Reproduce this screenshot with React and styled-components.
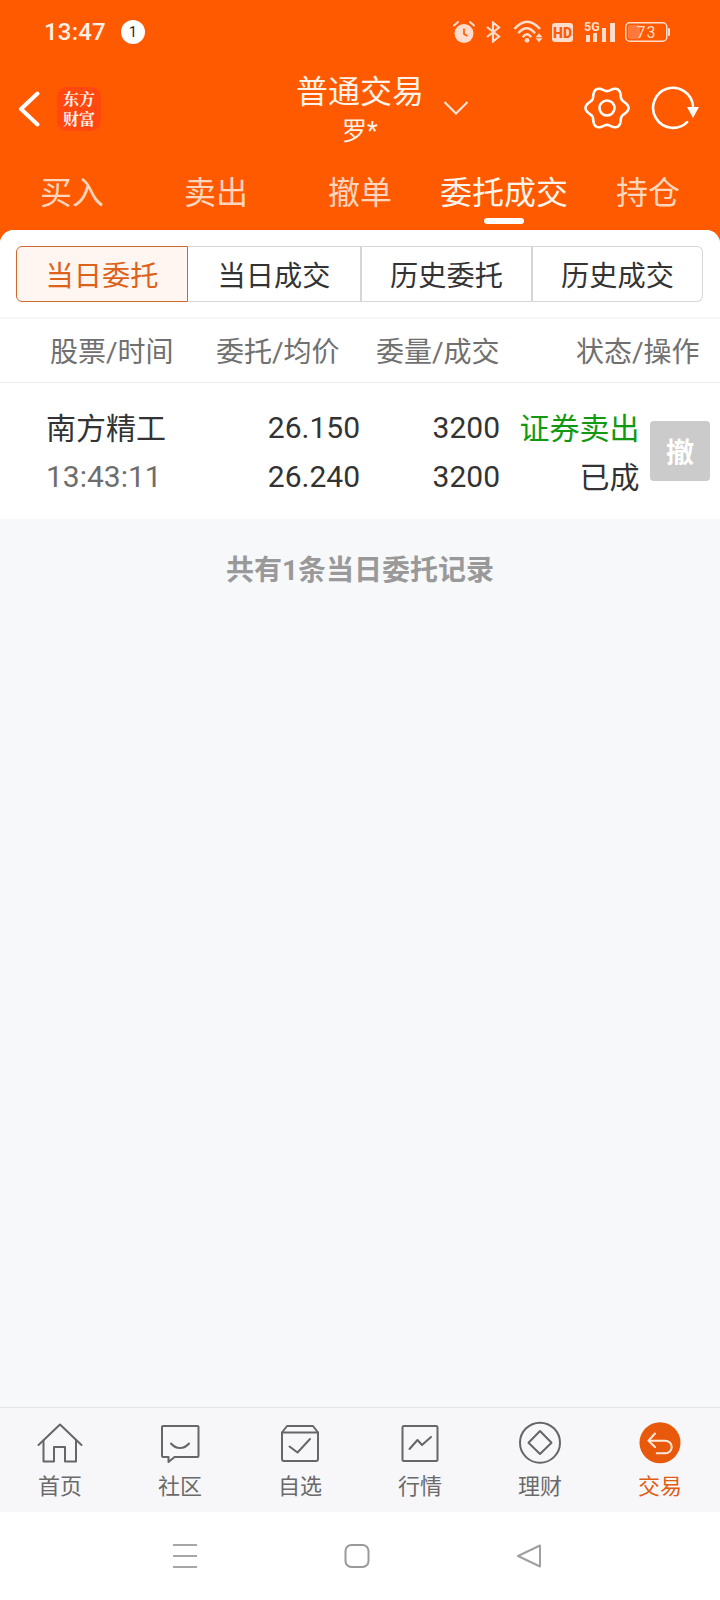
import React from 'react';
import styled, { createGlobalStyle } from 'styled-components';

const Global = createGlobalStyle`
  html, body { margin: 0; padding: 0; background: #fff; }
  * { box-sizing: border-box; }
  body { font-family: Roboto, "Noto Sans CJK SC", sans-serif; }
`;

const Page = styled.div`
  width: 720px; height: 1600px; display: flex; flex-direction: column;
  background: #ff5a00; overflow: hidden;
`;
const StatusBar = styled.div`
  height: 65px; display: flex; align-items: center; padding: 0 50px 1px 44px; color: #fff;
`;
const Time = styled.span`font-size: 24px; font-weight: 500; line-height: 1; color: #fff0e6; letter-spacing: 0.2px;`;
const Badge = styled.span`
  width: 24px; height: 24px; border-radius: 50%; background: #fff; color: #222; margin-left: 15px;
  display: flex; align-items: center; justify-content: center; font-size: 14px; font-weight: 400;
`;
const StatusIcons = styled.div`margin-left: auto; display: flex; align-items: center; gap: 9px;`;
const Header = styled.div`
  height: 90px; display: grid; grid-template-columns: 1fr 160px 1fr; align-items: center;
`;
const HeadLeft = styled.div`display: flex; align-items: center; padding: 0 0 3px 18px; gap: 17px;`;
const Logo = styled.div`
  width: 44px; height: 44px; border-radius: 10px; background: #ff4710; color: #fff3ea;
  display: flex; align-items: center; justify-content: center; text-align: center;
  font-family: "Noto Serif CJK SC", "Noto Sans CJK SC", sans-serif; font-size: 16px; line-height: 20px; font-weight: 700;
`;
const TitleBox = styled.div`align-self: start; display: flex; flex-direction: column; align-items: center; color: #fff;`;
const Title = styled.div`font-size: 32px; line-height: 44px; margin-top: 5px; color: #fff2e8;`;
const Sub = styled.div`font-size: 25px; line-height: 34px; margin-top: 1px; color: #fff2e8;`;
const HeadRight = styled.div`display: flex; align-items: center; padding: 0 20px 4px 3px;`;
const Actions = styled.div`margin-left: auto; display: flex; align-items: center; gap: 20px;`;
const Tabs = styled.div`height: 75px; display: grid; grid-template-columns: repeat(5, 144px);`;
const Tab = styled.div`
  position: relative; text-align: center; font-size: 32px; line-height: 54px; padding-top: 11px;
  color: ${p => (p.$active ? '#fff4ec' : '#ffd6bd')};
`;
const TabMark = styled.span`
  position: absolute; left: 52px; top: 63px; width: 40px; height: 6px; border-radius: 3px; background: #fff;
`;
const Main = styled.div`
  flex: 1; background: #f7f8fa; border-radius: 14px 14px 0 0; overflow: hidden; display: flex; flex-direction: column;
`;
const Top = styled.div`background: #fff; padding: 16px 17px 15px 16px; border-bottom: 2px solid #f6f6f6;`;
const Segments = styled.div`display: grid; grid-template-columns: 172px 174px 171px 1fr; height: 56px;`;
const Segment = styled.div`
  display: flex; align-items: center; justify-content: center; font-size: 28.200px; padding-bottom: 1px;
  border: 1px solid ${p => (p.$active ? '#cf6a2e' : '#d6d6d6')};
  border-left-width: ${p => (p.$active ? '1px' : '0')};
  border-right-width: ${p => (p.$active || p.$last ? '1px' : '2px')};
  background: ${p => (p.$active ? '#fff6f1' : '#fff')};
  color: ${p => (p.$active ? '#dd6118' : '#333')};
  border-radius: ${p => (p.$active ? '6px 0 0 6px' : p.$last ? '0 6px 6px 0' : '0')};
`;
const TableHead = styled.div`
  height: 64px; background: #fff; display: grid; grid-template-columns: 166px 160px 200px 1fr; padding-left: 50px;
  align-items: center; font-size: 28px; color: #707070; border-bottom: 1px solid #ebebeb; padding-bottom: 2px;
`;
const Row = styled.div`
  background: #fff; display: grid; grid-template-columns: 214px 100px 140px 139.500px 70.500px; grid-template-rows: 48px 50px;
  padding: 20px 0 18px 46px; align-items: center; font-size: 30px; color: #333;
`;
const Name = styled.div`font-size: 30px; padding-bottom: 2px;`;
const Clock = styled.div`color: #6d6d6d;`;
const Num = styled.div`text-align: right;`;
const Status = styled.div`text-align: right; font-size: 30px; padding-bottom: 2px; color: ${p => p.$color};`;
const Cancel = styled.div`
  grid-column: 5; grid-row: 1 / 3; justify-self: end; width: 60px; height: 60px; border-radius: 4px; background: #cbcbcb;
  margin-bottom: 2px; color: #fff; display: flex; align-items: center; justify-content: center; font-size: 28px; font-weight: 700;
`;
const Footnote = styled.div`
  text-align: center; font-size: 28px; font-weight: 700; color: #999; margin-top: 33px; line-height: 38px;
`;
const TabBar = styled.div`
  height: 105px; background: #f7f7f9; border-top: 1px solid #e4e4e4; display: grid; grid-template-columns: repeat(6, 120px);
`;
const NavItem = styled.div`
  display: flex; flex-direction: column; align-items: center; padding-top: 12px;
  color: ${p => (p.$active ? '#e25c12' : '#6a6a6a')};
  font-size: 22px; line-height: 30px;
  svg { display: block; margin-bottom: 8px; }
`;
const SystemBar = styled.div`
  height: 88px; background: #fff; display: grid; grid-template-columns: repeat(3, 172px); justify-content: center;
  justify-items: center; align-items: center; padding: 0 6px 0 0;
`;

const gearPath = (() => {
  const pts = [];
  for (let i = 0; i < 120; i++) {
    const a = (i / 120) * Math.PI * 2;
    const r = 19.2 + 2.3 * Math.cos(6 * a);
    pts.push(`${(23 + r * Math.cos(a)).toFixed(2)},${(23 + r * Math.sin(a)).toFixed(2)}`);
  }
  return pts.join(' ');
})();

const Tint = '#ffdccb';

const Alarm = () => (
  <svg width="22" height="24" viewBox="0 0 22 24">
    <circle cx="11" cy="13.500" r="9.500" fill={Tint} />
    <path d="M11 8.500V14l3.500 2" fill="none" stroke="#ff5a00" strokeWidth="1.600" />
    <path d="M1 5.500 5 2M21 5.500 17 2" stroke={Tint} strokeWidth="2" strokeLinecap="round" />
  </svg>
);
const Bluetooth = () => (
  <svg width="17" height="22" viewBox="-2 0 17 22">
    <path d="M1 6 13 15.500 7 20.500V1.500L13 6.500 1 16" fill="none" stroke={Tint} strokeWidth="2.200" />
  </svg>
);
const Wifi = () => (
  <svg width="33" height="24" viewBox="-3 0 33 24">
    <path d="M1.500 9Q14 -5.600 27 9M5.300 13.300Q13.500 3.300 22 13.300M9.700 17.300Q14 11.300 18 17.300" fill="none" stroke={Tint} strokeWidth="2.600" />
    <circle cx="14" cy="20.300" r="2.400" fill={Tint} />
    <path d="M22.500 17.300h7l-3.500 -4zM22.500 18.300h7l-3.500 4z" fill={Tint} />
  </svg>
);
const Hd = () => (
  <svg width="21" height="19" viewBox="0 0 21 19">
    <rect width="21" height="19" rx="3" fill={Tint} />
    <text x="10.500" y="15" textAnchor="middle" fontFamily="Roboto, sans-serif" fontSize="14" fontWeight="900" fill="#ff5a00">HD</text>
  </svg>
);
const Signal = () => (
  <svg width="34" height="24" viewBox="-2 0 34 24">
    <text x="0" y="10.500" fontFamily="Roboto, sans-serif" fontSize="12.500" fontWeight="700" fill={Tint}>5G</text>
    <rect x="2" y="15" width="4" height="7" fill={Tint} />
    <rect x="9" y="13" width="4" height="9" fill={Tint} />
    <rect x="18" y="8" width="4" height="14" fill={Tint} />
    <rect x="26" y="3" width="5" height="19" fill={Tint} />
  </svg>
);
const Battery = () => (
  <svg width="45" height="20" viewBox="0 0 45 20">
    <rect x="0.750" y="0.750" width="41" height="18.500" rx="4" fill="none" stroke={Tint} strokeWidth="1.500" />
    <rect x="3" y="3" width="12" height="14" rx="2" fill="#ff7a3a" />
    <rect x="43" y="6" width="2" height="8" rx="1" fill={Tint} />
    <text x="21.500" y="16" textAnchor="middle" fontFamily="Roboto, sans-serif" fontSize="16" fill={Tint} letterSpacing="1">73</text>
  </svg>
);

const Back = () => (
  <svg width="22" height="36" viewBox="0 0 22 36">
    <path d="M19.500 2.500 3 18l16.500 15.500" fill="none" stroke="#fff" strokeWidth="4" strokeLinecap="round" strokeLinejoin="round" />
  </svg>
);
const Caret = () => (
  <svg width="26" height="16" viewBox="0 0 26 16">
    <path d="M1.500 2 13 13.500 24.500 2" fill="none" stroke="#ffe9dc" strokeWidth="2" />
  </svg>
);
const Gear = () => (
  <svg width="46" height="46" viewBox="0 0 46 46">
    <polygon points={gearPath} fill="none" stroke="#fff" strokeWidth="2.600" strokeLinejoin="round" />
    <circle cx="23" cy="23" r="7.500" fill="none" stroke="#fff" strokeWidth="2.600" />
  </svg>
);
const Refresh = () => (
  <svg width="50" height="46" viewBox="0 0 50 46">
    <path d="M43 21A20 20 0 1 0 37.100 37.100" fill="none" stroke="#fff" strokeWidth="2.600" strokeLinecap="round" />
    <path d="M37 22h12l-6 11z" fill="#fff" />
  </svg>
);

const S = { fill: 'none', stroke: '#666', strokeWidth: 2, strokeLinejoin: 'round', strokeLinecap: 'round' };
const HomeIcon = () => (
  <svg width="48" height="44" viewBox="0 0 48 44">
    <path d="M2.500 25 24 4.500 45.500 25" {...S} />
    <path d="M7.500 20.500V41.500H18V27H29V41.500H40V20.500" {...S} />
  </svg>
);
const ChatIcon = () => (
  <svg width="48" height="44" viewBox="0 0 48 44">
    <path d="M7 6H41.500a1 1 0 0 1 1 1V36a1 1 0 0 1-1 1H18.500L12.500 42V37H7a1 1 0 0 1-1-1V7a1 1 0 0 1 1-1Z" {...S} />
    <path d="M15 23.500C20 29.500 28 29.500 33 23.500" {...S} />
  </svg>
);
const BoxIcon = () => (
  <svg width="48" height="44" viewBox="0 0 48 44">
    <path d="M6 12.500V39a2 2 0 0 0 2 2H40a2 2 0 0 0 2-2V12.500L37 6H11Z" {...S} />
    <path d="M6 12.500H42" {...S} />
    <path d="M13.500 26.500 21.500 32.500 34 19" {...S} />
  </svg>
);
const ChartIcon = () => (
  <svg width="48" height="44" viewBox="0 0 48 44">
    <rect x="6.500" y="6" width="35" height="35" rx="1.500" {...S} />
    <path d="M13.500 29 21.500 20 26 25 35 17" {...S} />
  </svg>
);
const DiamondIcon = () => (
  <svg width="48" height="44" viewBox="0 0 48 44">
    <circle cx="24" cy="22.700" r="20" {...S} />
    <path d="M24 11 35.500 22.700 24 34 12.500 22.700Z" {...S} />
  </svg>
);
const TradeIcon = () => (
  <svg width="48" height="44" viewBox="0 0 48 44">
    <circle cx="24" cy="22.700" r="20.500" fill="#e8590c" />
    <path d="M19 13.500 12.500 20.700 19 27M12.500 20.700H29C33 20.700 35.700 23.500 35.700 27S33 33.300 29 33.300H20.700" fill="none" stroke="#ffe9dc" strokeWidth="2" strokeLinecap="round" strokeLinejoin="round" />
  </svg>
);
const MenuGlyph = () => (
  <svg width="26" height="26" viewBox="0 0 26 26">
    <path d="M1 2H25M1 13H25M1 24H25" stroke="#a6a6a6" strokeWidth="2" />
  </svg>
);
const SquareGlyph = () => (
  <svg width="26" height="26" viewBox="0 0 26 26">
    <rect x="1.500" y="2" width="23" height="22" rx="6" fill="none" stroke="#999" strokeWidth="2" />
  </svg>
);
const TriangleGlyph = () => (
  <svg width="26" height="26" viewBox="0 0 26 26">
    <path d="M2 13 24 2.500V23.500Z" fill="none" stroke="#a0a0a0" strokeWidth="2" strokeLinejoin="round" />
  </svg>
);

const tabs = ['买入', '卖出', '撤单', '委托成交', '持仓'];
const segments = ['当日委托', '当日成交', '历史委托', '历史成交'];
const nav = [
  ['首页', HomeIcon], ['社区', ChatIcon], ['自选', BoxIcon],
  ['行情', ChartIcon], ['理财', DiamondIcon], ['交易', TradeIcon],
];

export default function App() {
  return (
    <Page>
      <Global />
      <StatusBar>
        <Time>13:47</Time>
        <Badge>1</Badge>
        <StatusIcons>
          <Alarm /><Bluetooth /><Wifi /><Hd /><Signal /><Battery />
        </StatusIcons>
      </StatusBar>
      <Header>
        <HeadLeft>
          <Back />
          <Logo>东方<br />财富</Logo>
        </HeadLeft>
        <TitleBox>
          <Title>普通交易</Title>
          <Sub>罗*</Sub>
        </TitleBox>
        <HeadRight>
          <Caret />
          <Actions><Gear /><Refresh /></Actions>
        </HeadRight>
      </Header>
      <Tabs>
        {tabs.map((t, i) => (
          <Tab key={t} $active={i === 3}>{t}{i === 3 && <TabMark />}</Tab>
        ))}
      </Tabs>
      <Main>
        <Top>
          <Segments>
            {segments.map((s, i) => (
              <Segment key={s} $active={i === 0} $last={i === 3}>{s}</Segment>
            ))}
          </Segments>
        </Top>
        <TableHead>
          <span>股票/时间</span><span>委托/均价</span><span>委量/成交</span><span>状态/操作</span>
        </TableHead>
        <Row>
          <Name>南方精工</Name>
          <Num>26.150</Num>
          <Num>3200</Num>
          <Status $color="#119a11">证券卖出</Status>
          <Cancel>撤</Cancel>
          <Clock>13:43:11</Clock>
          <Num>26.240</Num>
          <Num>3200</Num>
          <Status $color="#333">已成</Status>
        </Row>
        <Footnote>共有1条当日委托记录</Footnote>
      </Main>
      <TabBar>
        {nav.map(([label, Icon], i) => (
          <NavItem key={label} $active={i === 5}><Icon />{label}</NavItem>
        ))}
      </TabBar>
      <SystemBar>
        <MenuGlyph /><SquareGlyph /><TriangleGlyph />
      </SystemBar>
    </Page>
  );
}
